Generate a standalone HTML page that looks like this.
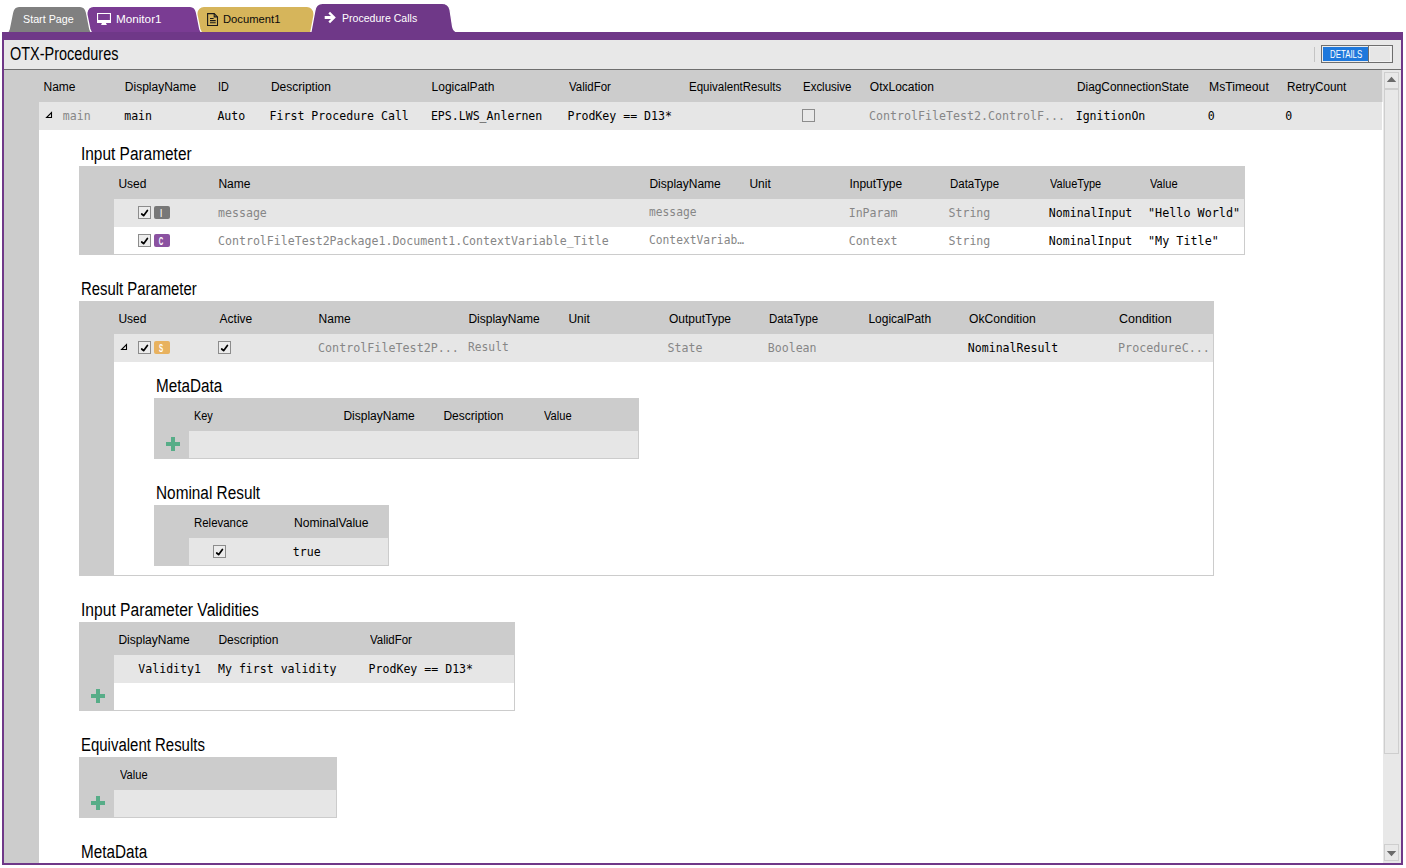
<!DOCTYPE html>
<html><head><meta charset="utf-8"><title>OTX-Procedures</title>
<style>
html,body{margin:0;padding:0;background:#fff;overflow:hidden;}
body{width:1406px;height:868px;position:relative;overflow:hidden;font-family:'Liberation Sans',sans-serif;}
div{position:absolute;box-sizing:content-box;}
.ts,.tm{position:absolute;white-space:nowrap;line-height:1;transform-origin:0 0;}
.ts{font-family:'Liberation Sans',sans-serif;font-size:12px;color:#000;}
.tm{font-family:'DejaVu Sans Mono','Liberation Mono',monospace;font-size:11.57px;color:#000;}
.cb{width:11px;height:11px;border:1px solid #8c8c8c;}
.bd{width:16px;height:13px;border-radius:2px;}
.bd span{position:absolute;left:-0.6px;top:0;width:16px;height:13px;text-align:center;color:#fff;font:bold 10px/15px 'Liberation Sans',sans-serif;transform:scaleX(0.62);}
</style></head><body>
<svg style="position:absolute;left:0;top:0" width="1406" height="40" viewBox="0 0 1406 40">
<path d="M192.8 34 L192.8 32 L194.10 29 L197.30 13.60 Q198.50 7 203.90 7 L306.90 7 Q312.30 7 313.50 13.60 L316.70 29 L318 32 L318 34 Z" fill="#d6b55b"/>
<path d="M82.2 34 L82.2 32 L83.50 29 L86.70 13.00 Q87.90 6.4 93.30 6.4 L190.00 6.4 Q195.40 6.4 196.60 13.00 L199.80 29 L201.1 32 L201.1 34 Z" fill="#7a3c93" stroke="#fff" stroke-width="1.3"/>
<path d="M7.9 34 L7.9 32 L9.20 29 L12.40 13.00 Q13.60 6.4 19.00 6.4 L80.00 6.4 Q85.40 6.4 86.60 13.00 L89.80 29 L91.1 32 L91.1 34 Z" fill="#808080" stroke="#fff" stroke-width="1.3"/>
<path d="M310.9 34 L310.9 32 L314.8 11 Q315.8 3.4 322.5 3.4 L442 3.4 Q448.6 3.4 450 9.5 L452.6 26.5 Q453.4 31 457 32 L457 34 Z" fill="#6f3888" stroke="#fff" stroke-width="1.3"/>
<rect x="2" y="32" width="1401" height="8" fill="#6f3888"/>
<path fill-rule="evenodd" d="M97 13H111V23H97Z M98.1 14.1V19.9H109.9V14.1Z M101.9 23H105.9L106.9 25H101.1Z" fill="#fff"/>
<g fill="none" stroke="#1a1a1a" stroke-width="1.1"><path d="M207.6 13.6h6.6l3.3 3.3v8.6h-9.9z"/><path d="M214.2 13.6v3.3h3.3"/><path d="M210 18.5h3.6M210 20.6h5.7M210 22.7h5.7"/></g>
<path d="M324.7 16h6.3l-2.6-2.6 1.6-1.6 5.8 5.7-5.8 5.7-1.6-1.6 2.6-2.6h-6.3z" fill="#fff"/>
</svg>
<span class="ts" style="left:23.00px;top:14px;font-size:11px;color:#fff;transform:scaleX(0.9760);">Start Page</span>
<span class="ts" style="left:115.80px;top:14px;font-size:11px;color:#fff;transform:scaleX(1.0640);">Monitor1</span>
<span class="ts" style="left:223.20px;top:14px;font-size:11px;color:#0a0a0a;transform:scaleX(1.0200);">Document1</span>
<span class="ts" style="left:341.50px;top:13px;font-size:11px;color:#fff;transform:scaleX(0.9610);">Procedure Calls</span>
<div style="left:2px;top:40px;width:2px;height:825px;background:#6f3888;"></div>
<div style="left:1401px;top:40px;width:2px;height:825px;background:#6f3888;"></div>
<div style="left:2px;top:863px;width:1401px;height:2px;background:#6f3888;"></div>
<div style="left:4px;top:40px;width:1397px;height:29px;background:#e8e8e8;"></div>
<div style="left:4px;top:69px;width:1397px;height:1px;background:#6e6e6e;"></div>
<span class="ts" style="left:10.20px;top:46px;font-size:17.5px;transform:scaleX(0.8260);">OTX-Procedures</span>
<div style="left:1314px;top:47px;width:1px;height:15px;background:#c4c4c4;"></div>
<div style="left:1321px;top:45px;width:70px;height:16px;border:1px solid #6e6e6e;background:#ececec"></div>
<div style="left:1323px;top:47px;width:45px;height:14px;background:#1e78dc;"></div>
<div style="left:1368px;top:46px;width:1px;height:16px;background:#6e6e6e;"></div>
<div style="left:1369px;top:46px;width:20px;height:14px;border:1px solid #f2f2f2;background:#e6e6e6"></div>
<span class="ts" style="left:1329.60px;top:49px;font-size:11px;color:#fff;transform:scaleX(0.7150);">DETAILS</span>
<div style="left:4px;top:70px;width:35px;height:793px;background:#cccccc;"></div>
<div style="left:4px;top:70px;width:1378px;height:32px;background:#cccccc;"></div>
<div style="left:39px;top:102px;width:1343px;height:28px;background:#e6e6e6;"></div>
<div style="left:1382px;top:70px;width:1px;height:32px;background:#e6e6e6;"></div>
<div style="left:1383px;top:70px;width:18px;height:793px;background:#e8e8e8;"></div>
<div style="left:1384px;top:72px;width:13px;height:15px;border:1px solid #cecece;background:#e8e8e8"></div>
<div style="left:1384px;top:89px;width:13px;height:663px;border:1px solid #cecece;background:#e8e8e8"></div>
<div style="left:1384px;top:844px;width:13px;height:15px;border:1px solid #cecece;background:#e8e8e8"></div>
<svg style="position:absolute;left:1386px;top:76px" width="11" height="7" viewBox="0 0 11 7"><path d="M0.8 6 L5.5 0.8 L10.2 6 Z" fill="#6a6a6a"/></svg>
<svg style="position:absolute;left:1386px;top:850px" width="11" height="7" viewBox="0 0 11 7"><path d="M0.8 1 L5.5 6.2 L10.2 1 Z" fill="#6a6a6a"/></svg>
<span class="ts" style="left:43.50px;top:81px;">Name</span>
<span class="ts" style="left:124.80px;top:81px;">DisplayName</span>
<span class="ts" style="left:217.50px;top:81px;transform:scaleX(0.9000);">ID</span>
<span class="ts" style="left:270.90px;top:81px;">Description</span>
<span class="ts" style="left:431.60px;top:81px;">LogicalPath</span>
<span class="ts" style="left:568.90px;top:81px;transform:scaleX(0.9570);">ValidFor</span>
<span class="ts" style="left:688.50px;top:81px;transform:scaleX(0.9600);">EquivalentResults</span>
<span class="ts" style="left:802.90px;top:81px;transform:scaleX(0.9560);">Exclusive</span>
<span class="ts" style="left:869.80px;top:81px;">OtxLocation</span>
<span class="ts" style="left:1076.80px;top:81px;transform:scaleX(0.9870);">DiagConnectionState</span>
<span class="ts" style="left:1208.90px;top:81px;transform:scaleX(1.0150);">MsTimeout</span>
<span class="ts" style="left:1287.00px;top:81px;transform:scaleX(0.9780);">RetryCount</span>
<svg style="position:absolute;left:45px;top:111px" width="8" height="8" viewBox="0 0 8 8"><path d="M6.5 1.6 L6.5 6.5 L1.6 6.5 Z" fill="none" stroke="#000" stroke-width="1.1"/></svg>
<span class="tm" style="left:62.80px;top:111px;color:#868686;">main</span>
<span class="tm" style="left:124.20px;top:111px;">main</span>
<span class="tm" style="left:217.40px;top:111px;">Auto</span>
<span class="tm" style="left:269.60px;top:111px;">First Procedure Call</span>
<span class="tm" style="left:430.90px;top:111px;">EPS.LWS_Anlernen</span>
<span class="tm" style="left:567.50px;top:111px;">ProdKey == D13*</span>
<div class="cb" style="left:802px;top:109px;background:#e9e9e9"></div>
<span class="tm" style="left:869.30px;top:111px;color:#868686;transform:scaleX(1.0060);">ControlFileTest2.ControlF...</span>
<span class="tm" style="left:1075.70px;top:111px;">IgnitionOn</span>
<span class="tm" style="left:1207.70px;top:111px;">0</span>
<span class="tm" style="left:1285.20px;top:111px;">0</span>
<span class="ts" style="left:81.40px;top:145px;font-size:18px;transform:scaleX(0.8570);">Input Parameter</span>
<div style="left:79px;top:166px;width:1166px;height:89px;background:#cccccc;"></div>
<div style="left:114px;top:199px;width:1130px;height:28px;background:#e6e6e6;"></div>
<div style="left:114px;top:227px;width:1130px;height:27px;background:#fff;"></div>
<span class="ts" style="left:118.40px;top:178px;">Used</span>
<span class="ts" style="left:218.40px;top:178px;">Name</span>
<span class="ts" style="left:649.40px;top:178px;">DisplayName</span>
<span class="ts" style="left:749.40px;top:178px;">Unit</span>
<span class="ts" style="left:849.40px;top:178px;">InputType</span>
<span class="ts" style="left:950.10px;top:178px;transform:scaleX(0.9550);">DataType</span>
<span class="ts" style="left:1050.40px;top:178px;transform:scaleX(0.9170);">ValueType</span>
<span class="ts" style="left:1150.30px;top:178px;transform:scaleX(0.9250);">Value</span>
<div class="cb" style="left:138px;top:206px;background:#ececec"><svg width="11" height="11" viewBox="0 0 11 11" style="position:absolute;left:0;top:0"><path d="M2.7 7.0 L4.6 8.7 L8.4 3.4" fill="none" stroke="#000" stroke-width="1.7" stroke-linecap="round" stroke-linejoin="round"/></svg></div>
<div class="bd" style="left:154px;top:206px;background:#787878"><span>I</span></div>
<span class="tm" style="left:217.80px;top:208px;color:#868686;transform:scaleX(1.0020);">message</span>
<span class="tm" style="left:649.00px;top:207px;color:#868686;transform:scaleX(0.9750);">message</span>
<span class="tm" style="left:848.70px;top:208px;color:#868686;">InParam</span>
<span class="tm" style="left:948.50px;top:208px;color:#868686;">String</span>
<span class="tm" style="left:1048.80px;top:208px;">NominalInput</span>
<span class="tm" style="left:1148.40px;top:208px;transform:scaleX(1.0170);">"Hello World"</span>
<div class="cb" style="left:138px;top:234px;background:#ececec"><svg width="11" height="11" viewBox="0 0 11 11" style="position:absolute;left:0;top:0"><path d="M2.7 7.0 L4.6 8.7 L8.4 3.4" fill="none" stroke="#000" stroke-width="1.7" stroke-linecap="round" stroke-linejoin="round"/></svg></div>
<div class="bd" style="left:154px;top:234px;background:#8b52a1"><span>C</span></div>
<span class="tm" style="left:217.80px;top:236px;color:#868686;transform:scaleX(1.0020);">ControlFileTest2Package1.Document1.ContextVariable_Title</span>
<span class="tm" style="left:649.00px;top:235px;color:#868686;transform:scaleX(0.9750);">ContextVariab…</span>
<span class="tm" style="left:848.70px;top:236px;color:#868686;">Context</span>
<span class="tm" style="left:948.50px;top:236px;color:#868686;">String</span>
<span class="tm" style="left:1048.80px;top:236px;">NominalInput</span>
<span class="tm" style="left:1148.40px;top:236px;transform:scaleX(1.0170);">"My Title"</span>
<span class="ts" style="left:81.40px;top:280px;font-size:18px;transform:scaleX(0.8260);">Result Parameter</span>
<div style="left:79px;top:301px;width:1135px;height:275px;background:#cccccc;"></div>
<div style="left:114px;top:334px;width:1099px;height:28px;background:#e6e6e6;"></div>
<div style="left:114px;top:362px;width:1099px;height:213px;background:#fff;"></div>
<span class="ts" style="left:118.40px;top:313px;">Used</span>
<span class="ts" style="left:219.60px;top:313px;">Active</span>
<span class="ts" style="left:318.60px;top:313px;">Name</span>
<span class="ts" style="left:468.40px;top:313px;">DisplayName</span>
<span class="ts" style="left:568.40px;top:313px;">Unit</span>
<span class="ts" style="left:669.00px;top:313px;">OutputType</span>
<span class="ts" style="left:769.10px;top:313px;transform:scaleX(0.9550);">DataType</span>
<span class="ts" style="left:868.40px;top:313px;">LogicalPath</span>
<span class="ts" style="left:969.40px;top:313px;transform:scaleX(1.0090);">OkCondition</span>
<span class="ts" style="left:1119.00px;top:313px;transform:scaleX(1.0400);">Condition</span>
<svg style="position:absolute;left:120px;top:343px" width="8" height="8" viewBox="0 0 8 8"><path d="M6.5 1.6 L6.5 6.5 L1.6 6.5 Z" fill="none" stroke="#000" stroke-width="1.1"/></svg>
<div class="cb" style="left:138px;top:341px;background:#ececec"><svg width="11" height="11" viewBox="0 0 11 11" style="position:absolute;left:0;top:0"><path d="M2.7 7.0 L4.6 8.7 L8.4 3.4" fill="none" stroke="#000" stroke-width="1.7" stroke-linecap="round" stroke-linejoin="round"/></svg></div>
<div class="bd" style="left:154px;top:341px;background:#e8b25f"><span>S</span></div>
<div class="cb" style="left:218px;top:341px;background:#ececec"><svg width="11" height="11" viewBox="0 0 11 11" style="position:absolute;left:0;top:0"><path d="M2.7 7.0 L4.6 8.7 L8.4 3.4" fill="none" stroke="#000" stroke-width="1.7" stroke-linecap="round" stroke-linejoin="round"/></svg></div>
<span class="tm" style="left:318.00px;top:343px;color:#868686;transform:scaleX(1.0120);">ControlFileTest2P...</span>
<span class="tm" style="left:468.20px;top:342px;color:#868686;transform:scaleX(0.9750);">Result</span>
<span class="tm" style="left:667.60px;top:343px;color:#868686;">State</span>
<span class="tm" style="left:767.80px;top:343px;color:#868686;">Boolean</span>
<span class="tm" style="left:967.80px;top:343px;">NominalResult</span>
<span class="tm" style="left:1117.60px;top:343px;color:#868686;transform:scaleX(1.0160);">ProcedureC...</span>
<span class="ts" style="left:156.40px;top:377px;font-size:18px;transform:scaleX(0.8480);">MetaData</span>
<div style="left:154px;top:398px;width:485px;height:61px;background:#cccccc;"></div>
<div style="left:189px;top:431px;width:449px;height:27px;background:#e6e6e6;"></div>
<span class="ts" style="left:193.60px;top:410px;transform:scaleX(0.9110);">Key</span>
<span class="ts" style="left:343.40px;top:410px;">DisplayName</span>
<span class="ts" style="left:443.40px;top:410px;">Description</span>
<span class="ts" style="left:544.40px;top:410px;transform:scaleX(0.9250);">Value</span>
<svg style="position:absolute;left:166px;top:437px" width="14" height="14" viewBox="0 0 14 14"><path d="M5 0h4v5h5v4h-5v5h-4v-5h-5v-4h5z" fill="#57ad88"/></svg>
<span class="ts" style="left:156.40px;top:484px;font-size:18px;transform:scaleX(0.8530);">Nominal Result</span>
<div style="left:154px;top:505px;width:235px;height:61px;background:#cccccc;"></div>
<div style="left:189px;top:538px;width:199px;height:27px;background:#e6e6e6;"></div>
<span class="ts" style="left:193.60px;top:517px;transform:scaleX(0.9530);">Relevance</span>
<span class="ts" style="left:294.30px;top:517px;transform:scaleX(1.0100);">NominalValue</span>
<div class="cb" style="left:213px;top:545px;background:#ececec"><svg width="11" height="11" viewBox="0 0 11 11" style="position:absolute;left:0;top:0"><path d="M2.7 7.0 L4.6 8.7 L8.4 3.4" fill="none" stroke="#000" stroke-width="1.7" stroke-linecap="round" stroke-linejoin="round"/></svg></div>
<span class="tm" style="left:292.80px;top:547px;">true</span>
<span class="ts" style="left:81.40px;top:601px;font-size:18px;transform:scaleX(0.8680);">Input Parameter Validities</span>
<div style="left:79px;top:622px;width:436px;height:89px;background:#cccccc;"></div>
<div style="left:114px;top:655px;width:400px;height:28px;background:#e6e6e6;"></div>
<div style="left:114px;top:683px;width:400px;height:27px;background:#fff;"></div>
<span class="ts" style="left:118.40px;top:634px;">DisplayName</span>
<span class="ts" style="left:218.40px;top:634px;">Description</span>
<span class="ts" style="left:370.00px;top:634px;transform:scaleX(0.9570);">ValidFor</span>
<span class="tm" style="left:138.30px;top:664px;">Validity1</span>
<span class="tm" style="left:218.00px;top:664px;">My first validity</span>
<span class="tm" style="left:368.60px;top:664px;">ProdKey == D13*</span>
<svg style="position:absolute;left:91px;top:689px" width="14" height="14" viewBox="0 0 14 14"><path d="M5 0h4v5h5v4h-5v5h-4v-5h-5v-4h5z" fill="#57ad88"/></svg>
<span class="ts" style="left:81.40px;top:736px;font-size:18px;transform:scaleX(0.8310);">Equivalent Results</span>
<div style="left:79px;top:757px;width:258px;height:61px;background:#cccccc;"></div>
<div style="left:114px;top:790px;width:222px;height:27px;background:#e6e6e6;"></div>
<span class="ts" style="left:119.80px;top:769px;transform:scaleX(0.9250);">Value</span>
<svg style="position:absolute;left:91px;top:796px" width="14" height="14" viewBox="0 0 14 14"><path d="M5 0h4v5h5v4h-5v5h-4v-5h-5v-4h5z" fill="#57ad88"/></svg>
<span class="ts" style="left:81.40px;top:843px;font-size:18px;transform:scaleX(0.8480);">MetaData</span>
</body></html>
